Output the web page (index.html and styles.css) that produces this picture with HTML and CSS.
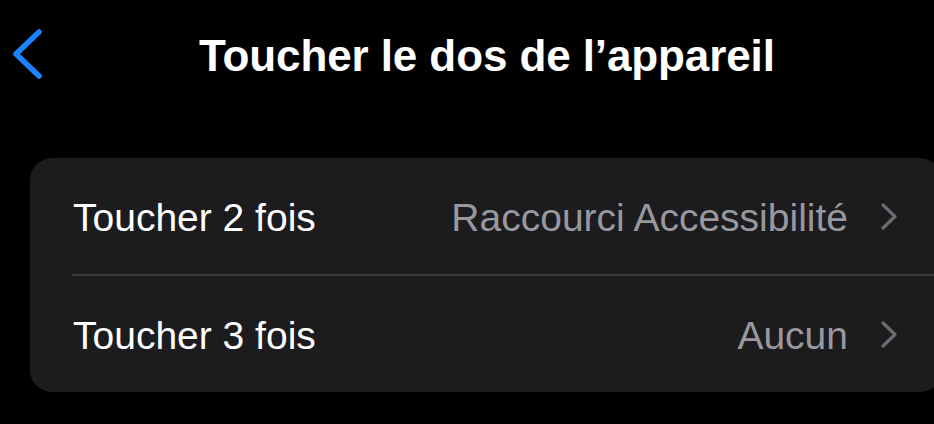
FILE: index.html
```html
<!DOCTYPE html>
<html lang="fr">
<head>
<meta charset="utf-8">
<title>Toucher le dos de l’appareil</title>
<link rel="stylesheet" href="styles.css">
</head>
<body>
<header class="nav">
  <span class="back">
    <svg width="36" height="60" viewBox="0 0 36 60" aria-hidden="true">
      <polyline points="28,7 5,29 28,51" fill="none" stroke="#1a84ff" stroke-width="5.5" stroke-linecap="round" stroke-linejoin="round"/>
    </svg>
  </span>
  <h1 class="title">Toucher le dos de l’appareil</h1>
</header>
<main class="card">
  <div class="row">
    <span class="label">Toucher 2 fois</span>
    <span class="value">Raccourci Accessibilité</span>
    <svg class="chev" width="18" height="28" viewBox="0 0 18 28" aria-hidden="true">
      <polyline points="3,2 15,13.5 3,25" fill="none" stroke="#6b6b70" stroke-width="3.2" stroke-linecap="round" stroke-linejoin="round"/>
    </svg>
  </div>
  <div class="sep"></div>
  <div class="row">
    <span class="label">Toucher 3 fois</span>
    <span class="value">Aucun</span>
    <svg class="chev" width="18" height="28" viewBox="0 0 18 28" aria-hidden="true">
      <polyline points="3,2 15,13.5 3,25" fill="none" stroke="#6b6b70" stroke-width="3.2" stroke-linecap="round" stroke-linejoin="round"/>
    </svg>
  </div>
</main>
</body>
</html>
```
FILE: styles.css
```css
html, body {
  margin: 0;
  padding: 0;
  background: #000;
  overflow: hidden;
}
body {
  width: 934px;
  height: 424px;
  font-family: "Liberation Sans", Arial, sans-serif;
  color: #fff;
}
.nav {
  display: flex;
  align-items: center;
  height: 110px;
}
.back {
  display: flex;
  margin-left: 11px;
}
.title {
  margin: 2px 0 0 152px;
  font-size: 44px;
  font-weight: 700;
  letter-spacing: -0.1px;
  line-height: 1;
}
.card {
  margin: 48px -8px 0 30px;
  background: #1c1c1e;
  border-radius: 22px;
}
.row {
  display: flex;
  align-items: center;
  height: 116px;
  padding: 0 44px 0 43px;
}
.label {
  font-size: 39px;
  flex: 1;
  margin-top: 3px;
}
.value {
  font-size: 39px;
  color: #98989e;
  margin-right: 32px;
  margin-top: 3px;
}
.chev {
  display: block;
  margin-top: 2px;
}
.sep {
  height: 2px;
  background: #38383b;
  margin-left: 42px;
}
```
